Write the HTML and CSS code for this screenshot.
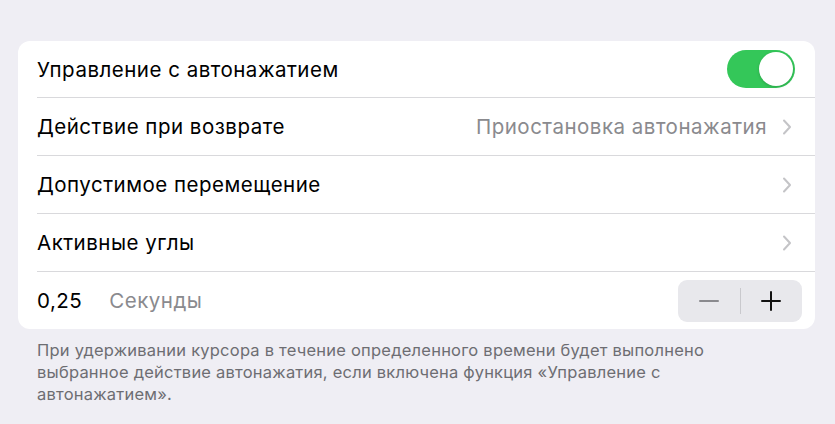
FILE: index.html
```html
<!DOCTYPE html>
<html lang="ru">
<head>
<meta charset="utf-8">
<title>Управление с автонажатием</title>
<link rel="stylesheet" href="styles.css">
</head>
<body>
<div class="page">
  <div class="card">
    <div class="row first">
      <span class="label">Управление с автонажатием</span>
      <span class="toggle"><span class="knob"></span></span>
    </div>
    <div class="row">
      <span class="label">Действие при возврате</span>
      <span class="right">
        <span class="value">Приостановка автонажатия</span>
        <svg class="chev" width="10" height="16" viewBox="0 0 10 16"><path d="M2 1.5 L8 8 L2 14.5" fill="none" stroke="#c4c4c7" stroke-width="2" stroke-linecap="round" stroke-linejoin="round"/></svg>
      </span>
    </div>
    <div class="row">
      <span class="label">Допустимое перемещение</span>
      <span class="right">
        <svg class="chev" width="10" height="16" viewBox="0 0 10 16"><path d="M2 1.5 L8 8 L2 14.5" fill="none" stroke="#c4c4c7" stroke-width="2" stroke-linecap="round" stroke-linejoin="round"/></svg>
      </span>
    </div>
    <div class="row">
      <span class="label">Активные углы</span>
      <span class="right">
        <svg class="chev" width="10" height="16" viewBox="0 0 10 16"><path d="M2 1.5 L8 8 L2 14.5" fill="none" stroke="#c4c4c7" stroke-width="2" stroke-linecap="round" stroke-linejoin="round"/></svg>
      </span>
    </div>
    <div class="row last">
      <span class="left">
        <span class="label num">0,25</span>
        <span class="value">Секунды</span>
      </span>
      <span class="stepper">
        <span class="step">
          <svg width="20" height="20" viewBox="0 0 20 20"><path d="M1 10 H19" stroke="#8a8a8e" stroke-width="2" stroke-linecap="round"/></svg>
        </span>
        <span class="divider"></span>
        <span class="step">
          <svg width="20" height="20" viewBox="0 0 20 20"><path d="M1 10 H19 M10 1 V19" stroke="#111" stroke-width="2" stroke-linecap="round"/></svg>
        </span>
      </span>
    </div>
  </div>
  <p class="footer">При удерживании курсора в течение определенного времени будет выполнено выбранное действие автонажатия, если включена функция «Управление с автонажатием».</p>
</div>
</body>
</html>
```

FILE: styles.css
```css
html, body {
  margin: 0;
  padding: 0;
  background: #efeef4;
}
body {
  font-family: Inter, "Noto Sans", "Liberation Sans", sans-serif;
  -webkit-font-smoothing: antialiased;
}
.page {
  padding: 41px 20px 0 18px;
}
.card {
  background: #ffffff;
  border-radius: 12px;
  padding-left: 19px;
  overflow: hidden;
}
.row {
  display: flex;
  align-items: center;
  justify-content: space-between;
  height: 57px;
  border-top: 1px solid #d9d9dc;
  padding-right: 23px;
}
.row.first {
  border-top: none;
  height: 56px;
  padding-right: 20px;
}
.row.last {
  padding-right: 13px;
}
.label {
  font-size: 20.5px;
  color: #000;
  letter-spacing: 0.5px;
}
.value {
  font-size: 20.5px;
  color: #8a8a8e;
  letter-spacing: 0.5px;
}
.right {
  display: flex;
  align-items: center;
  gap: 15px;
}
.chev {
  display: block;
}
.left {
  display: flex;
  align-items: center;
  gap: 27px;
}
.toggle {
  width: 68px;
  height: 38px;
  border-radius: 19px;
  background: #34c759;
  display: flex;
  align-items: center;
  justify-content: flex-end;
  padding: 0 2px;
  box-sizing: border-box;
}
.knob {
  width: 34px;
  height: 34px;
  border-radius: 50%;
  background: #fff;
  box-shadow: 0 1px 3px rgba(0,0,0,0.18);
}
.stepper {
  display: flex;
  align-items: center;
  width: 124px;
  height: 42px;
  border-radius: 9px;
  background: #e8e8ec;
}
.step {
  flex: 1;
  display: flex;
  align-items: center;
  justify-content: center;
}
.step svg {
  display: block;
}
.divider {
  width: 1px;
  height: 26px;
  background: #c9c9cd;
}
.footer {
  margin: 10px 0 0 19px;
  font-size: 16.5px;
  line-height: 22px;
  color: #6d6d72;
  max-width: 680px;
  letter-spacing: 0.22px;
}
```
